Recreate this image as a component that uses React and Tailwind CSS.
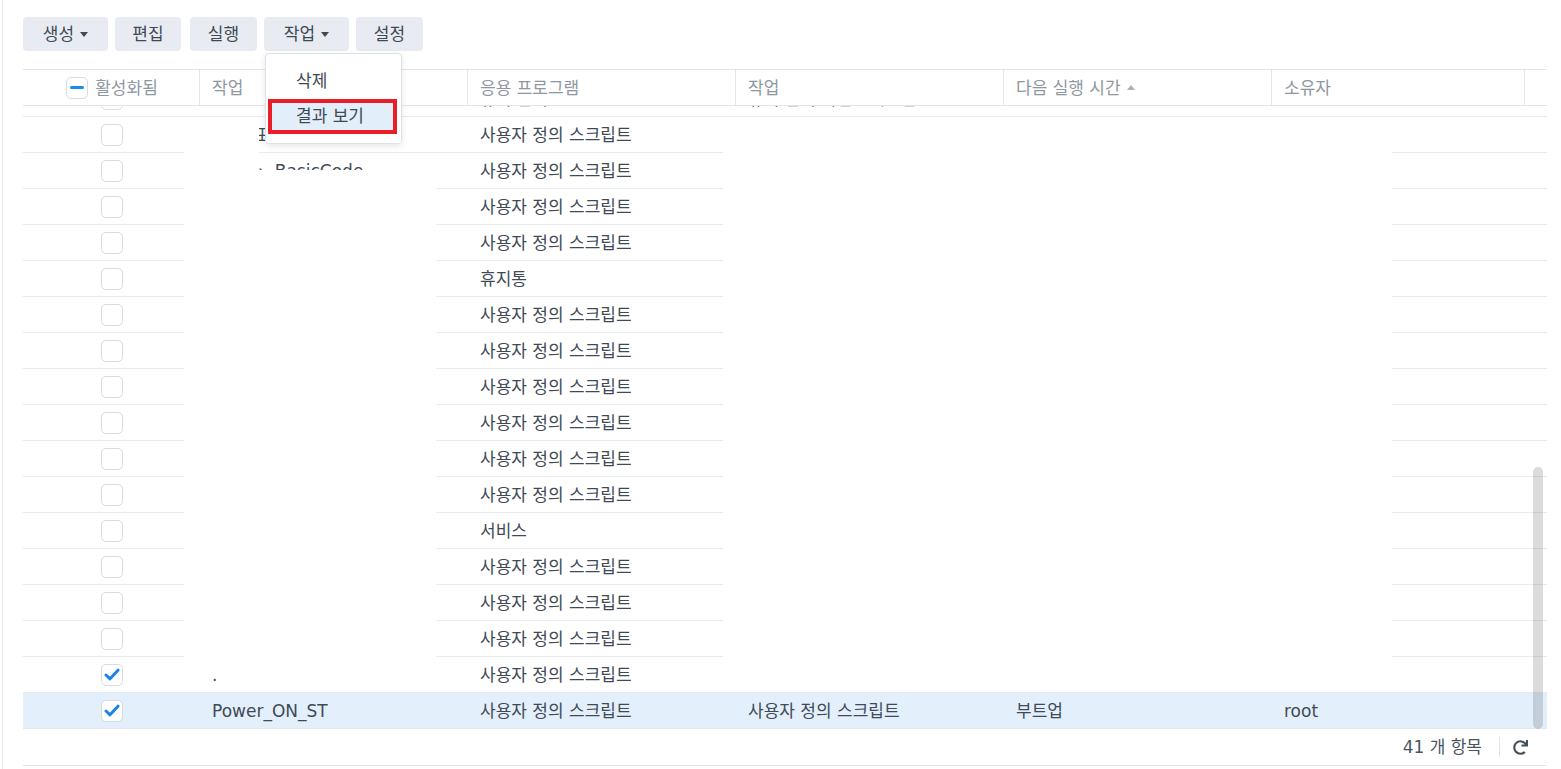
import React from "react";
import { FaRedo } from "react-icons/fa";

const COLS = "grid grid-cols-[177px_268px_268px_268px_268px_253px_22px]";
const SCRIPT = "사용자 정의 스크립트";

function Caret({ up }) {
  return (
    <svg width="8" height="5" viewBox="0 0 8 5" className="shrink-0">
      <path d={up ? "M0 5 L4 0 L8 5Z" : "M0 0 L8 0 L4 5Z"} fill="currentColor" />
    </svg>
  );
}

function Box({ checked, indeterminate }) {
  return (
    <span className="flex h-[22px] w-[22px] shrink-0 items-center justify-center rounded-[5px] border border-[#d5dce4] bg-white">
      {checked && (
        <svg width="16" height="13" viewBox="0 0 16 13">
          <path d="M2 7 L6 10.8 L14 2.2" fill="none" stroke="#1a83ea" strokeWidth="3" strokeLinecap="round" strokeLinejoin="round" />
        </svg>
      )}
      {indeterminate && <span className="h-[3px] w-[14px] rounded-full bg-[#1a8cf0]" />}
    </span>
  );
}

function Btn({ label, caret, w, ml }) {
  return (
    <button className={`flex h-[34px] items-center justify-center gap-[6px] rounded-[4px] bg-[#e8ecf2] text-[17px] text-[#3f4954] ${w} ${ml}`}>
      <span>{label}</span>
      {caret && <Caret />}
    </button>
  );
}

const apps = [
  SCRIPT, SCRIPT, SCRIPT, SCRIPT, "휴지통", SCRIPT, SCRIPT, SCRIPT, SCRIPT, SCRIPT, SCRIPT,
  "서비스", SCRIPT, SCRIPT, SCRIPT, SCRIPT,
];

export default function App() {
  return (
    <div className="relative h-[769px] w-[1561px] overflow-hidden bg-white font-['DejaVu_Sans','Noto_Sans_CJK_KR',sans-serif] text-[17px] leading-[22px] text-[#3f4a56]">
      <div className="ml-[2px] h-full border-l border-[#e3e7ec] pl-[20px]">
        <div className="w-[1524px]">
          {/* toolbar */}
          <div className="flex pt-[17px]">
            <Btn label="생성" caret w="w-[85px]" ml="" />
            <Btn label="편집" w="w-[66px]" ml="ml-[7px]" />
            <Btn label="실행" w="w-[67px]" ml="ml-[9px]" />
            <Btn label="작업" caret w="w-[85px]" ml="ml-[7px]" />
            <Btn label="설정" w="w-[67px]" ml="ml-[7px]" />
          </div>

          {/* header */}
          <div className={`${COLS} mt-[18px] h-[37px] border-y border-[#e0e5eb] text-[#8f98a1]`}>
            <div className="flex items-center justify-center gap-[7px] border-r border-[#e3e7ec] pl-[2px]">
              <Box indeterminate />
              <span>활성화됨</span>
            </div>
            <div className="flex items-center border-r border-[#e3e7ec] px-3">작업</div>
            <div className="flex items-center border-r border-[#e3e7ec] px-3">응용 프로그램</div>
            <div className="flex items-center border-r border-[#e3e7ec] px-3">작업</div>
            <div className="flex items-center gap-[6px] border-r border-[#e3e7ec] px-3">
              <span>다음 실행 시간</span>
              <span className="text-[#a9b0b8]"><Caret up /></span>
            </div>
            <div className="flex items-center border-r border-[#e3e7ec] px-3">소유자</div>
            <div />
          </div>

          {/* body */}
          <div className="relative h-[623px] overflow-hidden">
            <div className="-mt-[25px]">
              {/* partially scrolled row */}
              <div className={`${COLS} h-[36px] items-center border-b border-[#e7eaef]`}>
                <div className="flex justify-center"><Box /></div>
                <div className="whitespace-nowrap px-3"><span className="pl-[40px]">ㅡ스크립트</span></div>
                <div className="whitespace-nowrap px-3">유지 관리</div>
                <div className="whitespace-nowrap px-3">유지 관리 작업 - 시스템 로그</div>
                <div />
                <div />
                <div />
              </div>
              {apps.map((app, i) => (
                <div key={i} className={`${COLS} h-[36px] items-center border-b border-[#e7eaef]`}>
                  <div className="flex justify-center"><Box checked={i === 15} /></div>
                  <div className="whitespace-nowrap px-3">
                    {i === 0 && <span className="pl-[40px]">표</span>}
                    {i === 1 && (
                      <span className="flex items-center gap-[10px] pl-[46px]">
                        <span>›</span>
                        <span>BasicCode</span>
                      </span>
                    )}
                    {i === 15 && <span>.</span>}
                  </div>
                  <div className="whitespace-nowrap px-3">{app}</div>
                  <div />
                  <div />
                  <div />
                  <div />
                </div>
              ))}
              <div className={`${COLS} h-[36px] items-center border-b border-[#e3e8ee] bg-[#e4effc]`}>
                <div className="flex justify-center"><Box checked /></div>
                <div className="px-3">Power_ON_ST</div>
                <div className="whitespace-nowrap px-3">{SCRIPT}</div>
                <div className="whitespace-nowrap px-3">{SCRIPT}</div>
                <div className="px-3">부트업</div>
                <div className="px-3">root</div>
                <div />
              </div>
            </div>

            {/* redaction covers */}
            <div className="absolute left-[161px] top-[11px] h-[53px] w-[75px] bg-white" />
            <div className="absolute left-[161px] top-[64px] h-[492px] w-[252px] bg-white" />
            <div className="absolute left-[700px] top-[11px] h-[575px] w-[669px] bg-white" />

            {/* scrollbar */}
            <div className="absolute right-[4px] top-[361px] h-[262px] w-[10px] rounded-full bg-black/[0.14]" />
          </div>

          {/* footer */}
          <div className="flex h-[37px] items-center justify-end border-b border-[#e0e5eb] pr-[19px] text-[#4a5561]">
            <span>41 개 항목</span>
            <span className="ml-[17px] h-[20px] w-px bg-[#dfe4ea]" />
            <FaRedo className="ml-[13px] text-[15px] text-[#454f5a]" />
          </div>
        </div>
      </div>

      {/* dropdown menu */}
      <div className="absolute left-[265px] top-[53px] h-[91px] w-[137px] rounded-[4px] border border-[#dde2e8] bg-white pt-[13px] shadow-[0_2px_6px_rgba(0,0,0,0.10)]">
        <div className="mx-[4px] flex h-[28px] items-center pl-[26px] text-[#3f4954]">삭제</div>
        <div className="mx-[4px] mt-[7px] flex h-[28px] items-center rounded-[3px] bg-[#e3eefb] pl-[26px] text-[#3f4954]">결과 보기</div>
      </div>
      {/* red annotation box */}
      <div className="absolute left-[268px] top-[99px] h-[35px] w-[129px] border-[4px] border-[#e81e28]" />
    </div>
  );
}
